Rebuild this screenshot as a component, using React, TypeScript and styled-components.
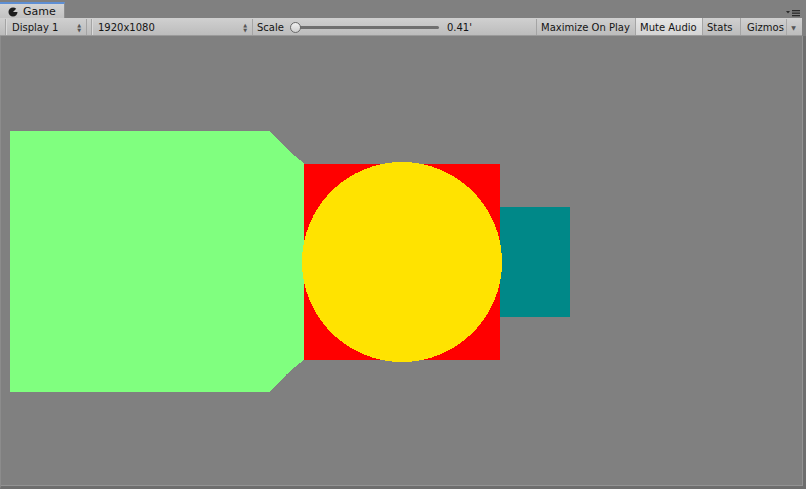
import React from 'react'
import styled, { createGlobalStyle } from 'styled-components'

const GlobalStyle = createGlobalStyle`
    html, body {
        margin: 0;
        padding: 0;
        background: #808080;
    }
    * {
        box-sizing: border-box;
    }
`

const Window = styled.div`
    display: flex;
    flex-direction: column;
    width: 806px;
    height: 489px;
    background: #808080;
    font-family: "DejaVu Sans", Verdana, sans-serif;
    color: #141414;
    overflow: hidden;
`

const TabStrip = styled.div`
    display: flex;
    align-items: flex-end;
    justify-content: space-between;
    height: 18px;
    padding-top: 2px;
`

const Tab = styled.div`
    display: flex;
    align-items: center;
    gap: 5px;
    width: 65px;
    height: 16px;
    padding-left: 8px;
    padding-top: 1px;
    background: linear-gradient(#d4d4d4, #c2c2c2);
    border-top: 2px solid #5e8fd4;
    border-right: 1px solid #8e8e8e;
    font-size: 11px;
    line-height: 14px;
`

const TabMenu = styled.div`
    align-self: flex-start;
    display: flex;
    align-items: center;
    padding-right: 6px;
    padding-top: 7px;
`

const Toolbar = styled.div`
    display: flex;
    align-items: stretch;
    width: 802px;
    height: 18px;
    padding-top: 1px;
    background: linear-gradient(#d0d0d0, #bcbcbc);
    border-bottom: 1px solid #9a9a9a;
    font-size: 10px;
`

const Spacer = styled.div<{ $w: number }>`
    width: ${p => p.$w}px;
    flex: none;
`

const Dropdown = styled.div<{ $w: number }>`
    display: flex;
    align-items: center;
    justify-content: space-between;
    width: ${p => p.$w}px;
    flex: none;
    padding: 0 5px 0 6px;
    border-left: 1px solid #a4a4a4;
    border-right: 1px solid #a4a4a4;
    box-shadow: inset 1px 0 0 #dadada;
`

const Arrows = styled.span`
    display: flex;
    flex-direction: column;
    align-items: center;
    gap: 1px;
    color: #555;
    font-size: 5px;
    line-height: 4px;
`

const ScaleGroup = styled.div`
    display: flex;
    align-items: center;
    width: 284px;
    flex: none;
    padding-left: 4px;
    border-right: 1px solid #a4a4a4;
`

const SliderTrack = styled.div`
    position: relative;
    width: 148px;
    height: 3px;
    margin-left: 7px;
    margin-right: 8px;
    border-radius: 2px;
    background: #6f6f6f;
`

const SliderThumb = styled.div`
    position: absolute;
    left: -1px;
    top: -4px;
    width: 11px;
    height: 11px;
    border-radius: 50%;
    background: linear-gradient(#f0f0f0, #cfcfcf);
    border: 1px solid #6a6a6a;
`

const ToolButton = styled.div<{ $w: number; $on?: boolean; $last?: boolean }>`
    display: flex;
    align-items: center;
    width: ${p => p.$w}px;
    flex: none;
    padding-left: ${p => (p.$last ? 6 : 4)}px;
    border-right: ${p => (p.$last ? 'none' : '1px solid #a4a4a4')};
    margin-top: -1px;
    padding-top: 1px;
    background: ${p => (p.$on ? 'linear-gradient(#e6e6e6, #d4d4d4)' : 'transparent')};
`

const GizmoArrow = styled.div`
    display: flex;
    align-items: center;
    justify-content: center;
    width: 14px;
    flex: none;
    border-left: 1px solid #a8a8a8;
    color: #555;
    font-size: 6px;
`

const GameView = styled.div`
    position: relative;
    flex: 1;
    background: #808080;
    border-left: 1px solid #8c8c8c;
    border-right: 3px solid #6e6e6e;
    border-bottom: 3px solid #6e6e6e;
    box-shadow: inset -1px -1px 0 #939393;
`

const Scene = styled.svg`
    display: block;
    position: absolute;
    left: -1px;
    top: 0;
`

const GameIcon = () => (
    <svg width="10" height="10" viewBox="0 0 10 10">
        <path d="M5 0.5 A4.5 4.5 0 1 0 9.5 5 L5 5 L8.2 1.8 A4.5 4.5 0 0 0 5 0.5 Z" fill="#1e1e1e" />
    </svg>
)

const MenuIcon = () => (
    <svg width="14" height="8" viewBox="0 0 14 8">
        <path d="M0 2 L4 2 L2 4.5 Z" fill="#2a2a2a" />
        <rect x="6" y="1" width="8" height="1.3" fill="#2a2a2a" />
        <rect x="6" y="3.5" width="8" height="1.3" fill="#2a2a2a" />
        <rect x="6" y="6" width="8" height="1.3" fill="#2a2a2a" />
    </svg>
)

// scene coordinates are relative to the top of the game view (page y - 36)
const App: React.FC = () => {
    return (
        <>
            <GlobalStyle />
            <Window>
                <TabStrip>
                    <Tab>
                        <GameIcon />
                        <span>Game</span>
                    </Tab>
                    <TabMenu>
                        <MenuIcon />
                    </TabMenu>
                </TabStrip>
                <Toolbar>
                    <Spacer $w={5} />
                    <Dropdown $w={82}>
                        <span>Display 1</span>
                        <Arrows><span>▲</span><span>▼</span></Arrows>
                    </Dropdown>
                    <Spacer $w={4} />
                    <Dropdown $w={162}>
                        <span>1920x1080</span>
                        <Arrows><span>▲</span><span>▼</span></Arrows>
                    </Dropdown>
                    <ScaleGroup>
                        <span>Scale</span>
                        <SliderTrack>
                            <SliderThumb />
                        </SliderTrack>
                        <span>0.41'</span>
                    </ScaleGroup>
                    <ToolButton $w={99}>Maximize On Play</ToolButton>
                    <ToolButton $w={67} $on>Mute Audio</ToolButton>
                    <ToolButton $w={38}>Stats</ToolButton>
                    <ToolButton $w={45} $last>Gizmos</ToolButton>
                    <GizmoArrow>▼</GizmoArrow>
                </Toolbar>
                <GameView>
                    <Scene width="806" height="453" viewBox="0 0 806 453" shapeRendering="crispEdges">
                        <path
                            d="M10 95 L270 95 Q286 114 304 127 L304 324 Q286 337 270 356 L10 356 Z"
                            fill="#80ff7f"
                        />
                        <rect x="304" y="128" width="196" height="196" fill="#ff0000" />
                        <rect x="500" y="171" width="70" height="110" fill="#008888" />
                        <circle cx="402" cy="226" r="100" fill="#ffe300" />
                    </Scene>
                </GameView>
            </Window>
        </>
    )
}

export default App
